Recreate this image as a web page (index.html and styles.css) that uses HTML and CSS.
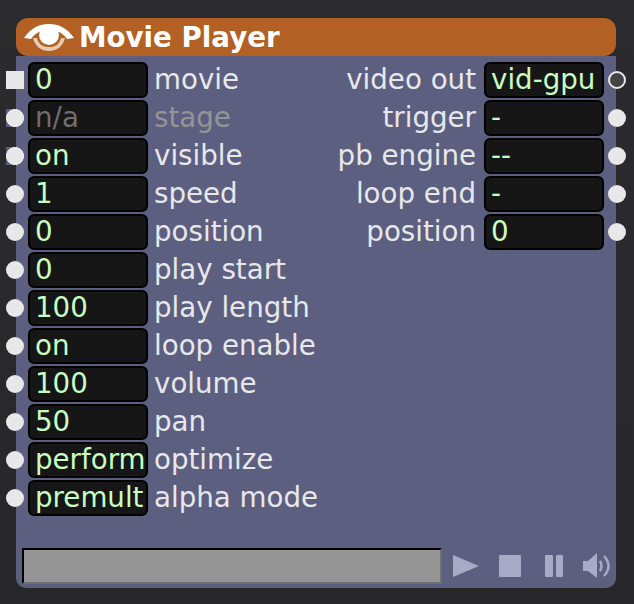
FILE: index.html
```html
<!DOCTYPE html>
<html lang="en">
<head>
    <meta charset="UTF-8">
    <meta name="viewport" content="width=device-width, initial-scale=1.0">
    <title>Movie Player</title>
    <link rel="stylesheet" href="styles.css">
</head>
<body>
    <div class="actor">
        <div class="title-bar">
            <svg class="eye" width="50" height="32" viewBox="0 0 50 32">
                <path d="M0 17 C7 7 15 3 25 3 C35 3 43 7 50 17 L43 18 C38 11 32 9 25 9 C18 9 12 11 7 18 Z" fill="#fff"/>
                <path d="M9 17 C11 26 18 30 25 30 C32 30 39 26 41 17 L37 17 C35 24 31 26 25 26 C19 26 15 24 13 17 Z" fill="#e9c9b0"/>
                <circle cx="25" cy="14" r="10" fill="#fff"/>
            </svg>
            <span class="title">Movie Player</span>
        </div>
        <div class="panel">
            <div class="columns">
                <div class="col">
                    <div class="row"><i class="port port-left port-square"></i><div class="field">0</div><span class="label">movie</span></div>
                    <div class="row"><i class="port port-left port-backed"></i><div class="field field-off">n/a</div><span class="label label-off">stage</span></div>
                    <div class="row"><i class="port port-left port-backed"></i><div class="field">on</div><span class="label">visible</span></div>
                    <div class="row"><i class="port port-left"></i><div class="field">1</div><span class="label">speed</span></div>
                    <div class="row"><i class="port port-left"></i><div class="field">0</div><span class="label">position</span></div>
                    <div class="row"><i class="port port-left"></i><div class="field">0</div><span class="label">play start</span></div>
                    <div class="row"><i class="port port-left"></i><div class="field">100</div><span class="label">play length</span></div>
                    <div class="row"><i class="port port-left"></i><div class="field">on</div><span class="label">loop enable</span></div>
                    <div class="row"><i class="port port-left"></i><div class="field">100</div><span class="label">volume</span></div>
                    <div class="row"><i class="port port-left"></i><div class="field">50</div><span class="label">pan</span></div>
                    <div class="row"><i class="port port-left"></i><div class="field">perform.</div><span class="label">optimize</span></div>
                    <div class="row"><i class="port port-left"></i><div class="field">premult</div><span class="label">alpha mode</span></div>
                </div>
                <div class="col col-right">
                    <div class="row"><span class="label">video out</span><div class="field">vid-gpu</div><i class="port port-right port-ring"></i></div>
                    <div class="row"><span class="label">trigger</span><div class="field">-</div><i class="port port-right"></i></div>
                    <div class="row"><span class="label">pb engine</span><div class="field">--</div><i class="port port-right"></i></div>
                    <div class="row"><span class="label">loop end</span><div class="field">-</div><i class="port port-right"></i></div>
                    <div class="row"><span class="label">position</span><div class="field">0</div><i class="port port-right"></i></div>
                </div>
            </div>
            <div class="transport">
                <div class="scrubber"></div>
                <svg class="controls" width="159" height="26" viewBox="0 0 159 26">
                    <path d="M0 2 L26 13 L0 24 Z" fill="#a8aac6"/>
                    <rect x="46" y="2" width="22" height="22" rx="1" fill="#a8aac6"/>
                    <rect x="92" y="2" width="8" height="22" rx="1" fill="#a8aac6"/>
                    <rect x="103" y="2" width="7" height="22" rx="1" fill="#a8aac6"/>
                    <path d="M130 8 L135 8 L144 0 L144 25 L135 18 L130 18 Z" fill="#a8aac6"/>
                    <path d="M147 8 Q150 13 147 18 M151 3 Q160 13 151 23" fill="none" stroke="#a8aac6" stroke-width="2.5"/>
                </svg>
            </div>
        </div>
    </div>
</body>
</html>
```

FILE: styles.css
```css
html, body {
    height: 100%;
}
body {
    margin: 0;
    background: linear-gradient(#2b2b2d, #272729);
    font-family: "DejaVu Sans", sans-serif;
    overflow: hidden;
}
.actor {
    width: 600px;
    padding: 18px 0 0 16px;
}
.title-bar {
    display: flex;
    align-items: center;
    gap: 5px;
    height: 38px;
    padding-left: 8px;
    background-color: #b26023;
    border-radius: 12px;
}
.eye {
    flex: none;
    filter: blur(0.6px);
}
.title {
    color: #fff;
    font-size: 27.7px;
    font-weight: bold;
}
.panel {
    height: 532px;
    box-sizing: border-box;
    padding: 6px 4px 4px 6px;
    background-color: #5c5f80;
    border-radius: 0 0 10px 10px;
    display: flex;
    flex-direction: column;
    justify-content: space-between;
}
.columns {
    display: flex;
    justify-content: space-between;
    padding: 0 8px 0 6px;
}
.col {
    display: flex;
    flex-direction: column;
    gap: 2px;
}
.row {
    position: relative;
    display: flex;
    align-items: center;
    gap: 6px;
    height: 36px;
}
.col-right .row {
    justify-content: flex-end;
    gap: 8px;
}
.field {
    box-sizing: border-box;
    width: 120px;
    height: 36px;
    padding-left: 5px;
    background-color: #161616;
    border: 2px solid #000;
    border-radius: 6px;
    color: #c8fdc0;
    font-size: 27.7px;
    line-height: 32px;
    overflow: hidden;
    white-space: nowrap;
}
.field-off {
    color: #6e6e6e;
}
.label {
    color: #e8e8ea;
    font-size: 27.7px;
    line-height: 36px;
    white-space: nowrap;
}
.label-off {
    color: #959595;
}
.port {
    position: absolute;
    top: 9px;
    width: 18px;
    height: 18px;
    border-radius: 50%;
    background-color: #e8e8e8;
}
.port-left {
    left: -22px;
}
.port-right {
    right: -22px;
}
.port-square {
    border-radius: 0;
}
.port-backed {
    border-radius: 0;
    background: radial-gradient(circle, #e8e8e8 8.7px, #5c5f80 9.3px);
}
.port-ring {
    box-sizing: border-box;
    background-color: #444;
    border: 2px solid #e8e8e8;
}
.transport {
    display: flex;
    align-items: center;
    gap: 11px;
}
.scrubber {
    flex: none;
    box-sizing: border-box;
    width: 420px;
    height: 36px;
    background-color: #959595;
    border-style: solid;
    border-width: 2px;
    border-color: #000 #6f6f6f #6f6f6f #000;
}
.controls {
    flex: none;
    filter: blur(0.4px);
}
```
